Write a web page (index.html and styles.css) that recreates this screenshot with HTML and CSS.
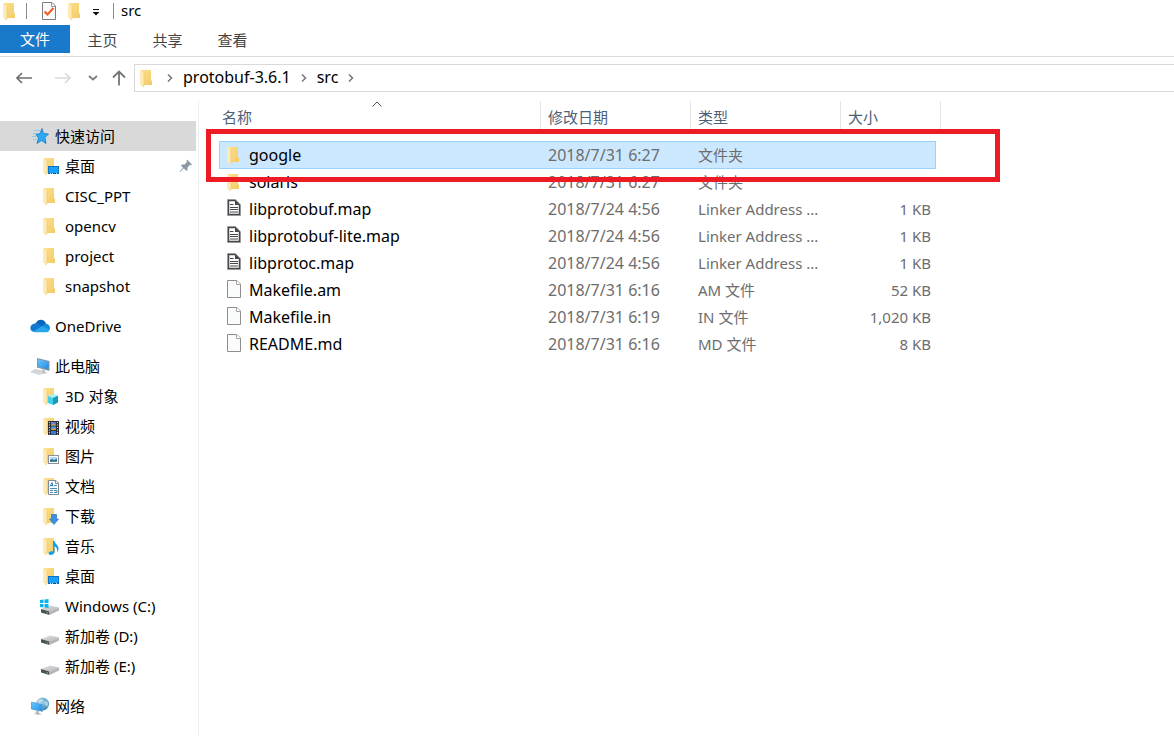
FILE: index.html
```html
<!DOCTYPE html>
<html lang="zh-CN">
<head>
<meta charset="utf-8">
<meta name="viewport" content="width=device-width, initial-scale=1">
<title>src</title>
<link rel="stylesheet" href="styles.css">
</head>
<body>
<svg class="sprite" aria-hidden="true">
  <defs>
    <linearGradient id="gold" x1="0" y1="0" x2="1" y2="1"><stop offset="0" stop-color="#fbe08f"/><stop offset="1" stop-color="#f3cb66"/></linearGradient>
    <linearGradient id="screen" x1="0" y1="0" x2="1" y2="1"><stop offset="0" stop-color="#6cc4fb"/><stop offset="1" stop-color="#1c8fe6"/></linearGradient>
    <linearGradient id="metal" x1="0" y1="0" x2="1" y2="1"><stop offset="0" stop-color="#e4e5e7"/><stop offset="1" stop-color="#b0b2b6"/></linearGradient>
    <radialGradient id="earth" cx=".4" cy=".3" r=".8"><stop offset="0" stop-color="#a9d8ee"/><stop offset="1" stop-color="#2d7ba9"/></radialGradient>
  </defs>
  <symbol id="folder" viewBox="0 0 20 20">
    <path d="M4 2H14V12L15 13V17H6L4 15Z" fill="url(#gold)"/>
    <path d="M3 2L7 5V18L5.500 19L3 16.500Z" fill="#fdeab4"/>
    <path d="M7 5V18L5.500 19" fill="none" stroke="#edc766" stroke-width=".6"/>
  </symbol>
  <symbol id="folder-desktop" viewBox="0 0 20 20">
    <use href="#folder"/>
    <rect x="8.500" y="10.500" width="10" height="7" fill="#18a0fb" stroke="#0874c4"/>
    <path d="M9 17.500H18" stroke="#06518e"/><path d="M10 17.500h1M12 17.500h1M16 17.500h1" stroke="#bfe5ff"/>
  </symbol>
  <symbol id="folder-3d" viewBox="0 0 20 20">
    <use href="#folder"/>
    <path d="M8 10L13 8L18 9.500L13 12Z" fill="#a9effa"/><path d="M8 10L13 12V19L8 17Z" fill="#46cfe3"/><path d="M13 12L18 9.500V16.500L13 19Z" fill="#129cbc"/>
  </symbol>
  <symbol id="folder-video" viewBox="0 0 20 20">
    <use href="#folder"/>
    <rect x="8" y="5" width="11" height="14" fill="#303238"/>
    <path d="M9.500 6V19M17.500 6V19" stroke="#d8dade" stroke-dasharray="1 1.500"/>
    <rect x="11" y="6" width="5" height="3.500" fill="#4d8be8"/><rect x="11" y="10.500" width="5" height="3.500" fill="#37a0e6"/><rect x="11" y="15" width="5" height="3.500" fill="#3978ce"/>
    <path d="M11 9.500L13 7.500L16 9.500ZM11 14L14 12L16 14Z" fill="#e6a72f"/><path d="M14 6h2v2Z" fill="#d6453c"/>
  </symbol>
  <symbol id="folder-picture" viewBox="0 0 20 20">
    <use href="#folder"/>
    <rect x="8.500" y="9.500" width="10" height="8" fill="#fff" stroke="#8b929a"/>
    <rect x="10" y="11" width="7" height="5" fill="#aed9f5"/><path d="M10 14L12 13L14 14L17 12.500V16H10Z" fill="#356b9a"/><path d="M10 16L14 14.500L17 15V16Z" fill="#4b9677"/>
  </symbol>
  <symbol id="folder-document" viewBox="0 0 20 20">
    <use href="#folder"/>
    <path d="M8.500 4.500H16L18.500 7V18.500H8.500Z" fill="#fff" stroke="#858b92"/><path d="M15.500 4.500V7.500H18.500" fill="none" stroke="#858b92"/>
    <path d="M10 10.500L12 6.500L13 10.500M11 9.500H13" fill="none" stroke="#258bc9"/><path d="M14 9.500H17M10 12.500H17M10 16.500H13M14 14.500H17V16.500H14" stroke="#438db9" fill="none"/><path d="M10 14.500H13" stroke="#697580"/>
  </symbol>
  <symbol id="folder-download" viewBox="0 0 20 20">
    <use href="#folder"/><path d="M11.500 8.500H16.500V13H18.500L14 18.500L9.500 13H11.500Z" fill="#3c91e4" stroke="#2776c5" stroke-width=".7"/>
  </symbol>
  <symbol id="folder-music" viewBox="0 0 20 20">
    <use href="#folder"/><path d="M13 5H14.500C15 8 18.500 9 18.500 12.500C18.500 14 18 15 17 16C17.500 12.500 16.500 11 14.500 10.500V16C14.500 18 12.500 19 10.500 19C8 19 8 16 10.500 15.500C11.500 15.200 12.500 15.300 13 15.500Z" fill="#119ff0"/>
  </symbol>
  <symbol id="star" viewBox="0 0 20 20">
    <path d="M12 2.500L13.500 7.500L18.500 8L15 11.500L16 17.500L11.500 14.500L7 17.500L8.500 12L6 8.500L10 7.500Z" fill="#2da9f4" stroke="#167bc0" stroke-width=".8"/>
    <path d="M4 4.500H10M3 7.500H7M2 10.500H6M3 13.500H6.500" stroke="#7cc4ec" stroke-width=".8"/>
  </symbol>
  <symbol id="cloud" viewBox="0 0 20 20">
    <path d="M5.500 8C7 2.500 14.500 2 16.200 8L11 12Z" fill="#0864b8"/>
    <path d="M4 16C-1.500 15 -.5 8 5 7.500C8 6.500 10 9 13 10.500L8 15.500Z" fill="#1179cf"/>
    <path d="M15 7.700C19 7.500 21 11 19.500 14L12 12L13 9Z" fill="#168bdc"/>
    <path d="M3 15.500L12 10.300L19.700 13.500C19 16 17.500 16.300 16 16.300H5Q4 16.300 3 15.500Z" fill="#28a8ea"/>
  </symbol>
  <symbol id="computer" viewBox="0 0 20 20">
    <path d="M7 2L19.500 5V15L7 11.500Z" fill="#8d9399"/><path d="M8 3.300L18.500 5.800V13.500L8 10.500Z" fill="url(#screen)"/>
    <path d="M12 13L15 14V16L18 17L13 18L9 16.500L12 15.500Z" fill="#c1c5c9"/><path d="M1 16L5 13.500L14 15.500L10 18.500Z" fill="#e2e4e6" stroke="#b5b9be" stroke-width=".6"/><path d="M3.500 15.500L10 17.200M5 14.500L12 16.200" stroke="#bdc0c3" stroke-width=".5"/>
  </symbol>
  <symbol id="drive" viewBox="0 0 20 20">
    <path d="M1 13L10 9.500L19 11.500L9.500 15.500Z" fill="url(#metal)"/><path d="M1 13L9.500 15.500V19L1 16.500Z" fill="#4d5053"/><path d="M9.500 15.500L19 11.500V14.500L9.500 19Z" fill="#b2b4b8"/><path d="M6.500 16.500L8 17" stroke="#42d95a"/>
  </symbol>
  <symbol id="drive-system" viewBox="0 0 20 20">
    <use href="#drive"/><path d="M0 4L3.500 3.500V7H0ZM4.500 3.400L8.500 3V7H4.500ZM0 8H3.500V11.500L0 11ZM4.500 8H8.500V12L4.500 11.600Z" fill="#08b4ef"/>
  </symbol>
  <symbol id="network" viewBox="0 0 20 20">
    <circle cx="12.500" cy="8" r="6.500" fill="url(#earth)"/><path d="M8 4C10 2.500 12 3 13 4C12 6 10 5.500 9 7L7 6ZM14 6L17 5L18.500 8L17 11L15 9Z" fill="#d4ecf5" opacity=".6"/>
    <path d="M1 5.500L13 8V16L1 13.500Z" fill="#dcebf5"/><path d="M1.500 6.200L12.500 8.500V15.300L1.500 13Z" fill="url(#screen)" stroke="#2b80ba" stroke-width=".5"/><path d="M6 14.500L9 15.200V17L12 18L8 19L4 17.500L6 16.500Z" fill="#b4bdc5"/>
  </symbol>
  <symbol id="page" viewBox="0 0 20 20">
    <path d="M3.500 .5H13L16.500 4V17.500H3.500Z" fill="#fafbfb" stroke="#8e8e8e"/><path d="M12.500 .5V4.500H16.500" fill="#fff" stroke="#a3a3a3"/>
  </symbol>
  <symbol id="map-file" viewBox="0 0 20 20">
    <path d="M4 1H11L16 6V16H4Z" fill="#fff" stroke="#b5b5b7" stroke-width="2"/>
    <path d="M4.500 1.500H11L15.500 6V15.500H4.500Z" fill="#fff" stroke="#48484c" stroke-width="1.500"/><path d="M11 1.500V6H15.500Z" fill="#48484c"/><path d="M6 5.500H9.500M6 8.500H14M6 10.500H14M6 13H14" stroke="#48484c" stroke-width="1.200"/>
  </symbol>
  <symbol id="properties" viewBox="0 0 20 20">
    <path d="M3.500 1.500H13L16.500 5V18.500H3.500Z" fill="#fafafa" stroke="#7d7d7d"/><path d="M12.500 1.500V5.500H16.500" fill="none" stroke="#999"/><path d="M5.500 10.500L8.500 13.500L14.500 7" fill="none" stroke="#ef5b20" stroke-width="2"/>
  </symbol>
  <symbol id="pin" viewBox="0 0 14 14">
    <path d="M8 .5L13 5.500L12 6.300L10.800 6L8.500 8.500L8.500 11L7.500 12L4.800 9.300L1 13L.5 12.500L4 8.700L2 6.500L3 5.500H5.500L8 3L7.500 1.500Z" fill="#8b98a4"/>
  </symbol>
  <symbol id="chevron" viewBox="0 0 8 10"><path d="M2 1.500L5.500 5L2 8.500" fill="none" stroke="#767676" stroke-width="1.500"/></symbol>
</svg>

<header class="titlebar">
  <svg class="icon"><use href="#folder"/></svg>
  <span class="rule rule-first"></span>
  <button class="quick" aria-label="属性"><svg class="icon"><use href="#properties"/></svg></button>
  <button class="quick" aria-label="新建文件夹"><svg class="icon"><use href="#folder"/></svg></button>
  <button class="quick quick-menu" aria-label="自定义快速访问工具栏"><svg width="8" height="8" viewBox="0 0 8 8"><path d="M1 1.500H7" stroke="#111"/><path d="M.5 4H7.500L4 7.500Z" fill="#111"/></svg></button>
  <span class="rule rule-last"></span>
  <h1 class="title">src</h1>
</header>

<div class="tabs">
  <button class="tab tab-file">文件</button>
  <button class="tab">主页</button>
  <button class="tab">共享</button>
  <button class="tab">查看</button>
</div>

<nav class="toolbar" aria-label="导航">
  <div class="history">
    <button aria-label="后退"><svg width="16" height="12" viewBox="0 0 16 12"><path d="M16 6H1.500M6 1L1 6L6 11" fill="none" stroke="#6f6f6f" stroke-width="1.600"/></svg></button>
    <button aria-label="前进"><svg width="16" height="12" viewBox="0 0 16 12"><path d="M0 6H14.500M10 1L15 6L10 11" fill="none" stroke="#d9d9d9" stroke-width="1.600"/></svg></button>
    <button aria-label="最近位置"><svg width="10" height="6" viewBox="0 0 10 6"><path d="M1 1L5 4.500L9 1" fill="none" stroke="#7b7b7b" stroke-width="1.800"/></svg></button>
    <button aria-label="上移"><svg width="14" height="16" viewBox="0 0 14 16"><path d="M7 15.500V1.500M1 7.500L7 1.500L13 7.500" fill="none" stroke="#757575" stroke-width="1.800"/></svg></button>
  </div>
  <div class="address">
    <svg class="icon"><use href="#folder"/></svg>
    <svg class="chevron"><use href="#chevron"/></svg>
    <a href="#protobuf">protobuf-3.6.1</a>
    <svg class="chevron"><use href="#chevron"/></svg>
    <a href="#src">src</a>
    <svg class="chevron"><use href="#chevron"/></svg>
  </div>
</nav>

<div class="body">
  <aside class="sidebar">
    <div class="group">
      <a class="item root current" href="#quick"><svg class="icon"><use href="#star"/></svg>快速访问</a>
      <a class="item" href="#desktop"><svg class="icon"><use href="#folder-desktop"/></svg>桌面<svg class="pin"><use href="#pin"/></svg></a>
      <a class="item" href="#cisc"><svg class="icon"><use href="#folder"/></svg>CISC_PPT</a>
      <a class="item" href="#opencv"><svg class="icon"><use href="#folder"/></svg>opencv</a>
      <a class="item" href="#project"><svg class="icon"><use href="#folder"/></svg>project</a>
      <a class="item" href="#snapshot"><svg class="icon"><use href="#folder"/></svg>snapshot</a>
    </div>
    <div class="group">
      <a class="item root" href="#onedrive"><svg class="icon"><use href="#cloud"/></svg>OneDrive</a>
    </div>
    <div class="group">
      <a class="item root" href="#pc"><svg class="icon"><use href="#computer"/></svg>此电脑</a>
      <a class="item" href="#objects"><svg class="icon"><use href="#folder-3d"/></svg>3D 对象</a>
      <a class="item" href="#videos"><svg class="icon"><use href="#folder-video"/></svg>视频</a>
      <a class="item" href="#pictures"><svg class="icon"><use href="#folder-picture"/></svg>图片</a>
      <a class="item" href="#documents"><svg class="icon"><use href="#folder-document"/></svg>文档</a>
      <a class="item" href="#downloads"><svg class="icon"><use href="#folder-download"/></svg>下载</a>
      <a class="item" href="#music"><svg class="icon"><use href="#folder-music"/></svg>音乐</a>
      <a class="item" href="#pc-desktop"><svg class="icon"><use href="#folder-desktop"/></svg>桌面</a>
      <a class="item" href="#c"><svg class="icon"><use href="#drive-system"/></svg>Windows (C:)</a>
      <a class="item" href="#d"><svg class="icon"><use href="#drive"/></svg>新加卷 (D:)</a>
      <a class="item" href="#e"><svg class="icon"><use href="#drive"/></svg>新加卷 (E:)</a>
    </div>
    <div class="group">
      <a class="item root" href="#network-places"><svg class="icon"><use href="#network"/></svg>网络</a>
    </div>
  </aside>

  <main class="content">
    <table class="files">
      <colgroup><col class="c-edge"><col class="c-name"><col class="c-date"><col class="c-type"><col class="c-size"><col class="c-edge"></colgroup>
      <thead>
        <tr>
          <th colspan="2" aria-sort="ascending"><button class="sort sort-name">名称<svg class="caret" viewBox="0 0 10 6"><path d="M.5 5.500L5 1L9.500 5.500" fill="none" stroke="#555"/></svg></button></th>
          <th><button class="sort">修改日期</button></th>
          <th><button class="sort">类型</button></th>
          <th colspan="2"><button class="sort">大小</button></th>
        </tr>
      </thead>
      <tbody>
        <tr class="selected"><td></td><td class="name"><span><svg class="icon"><use href="#folder"/></svg>google</span></td><td class="date">2018/7/31 6:27</td><td>文件夹</td><td class="size"></td><td></td></tr>
        <tr><td></td><td class="name"><span><svg class="icon"><use href="#folder"/></svg>solaris</span></td><td class="date">2018/7/31 6:27</td><td>文件夹</td><td class="size"></td><td></td></tr>
        <tr><td></td><td class="name"><span><svg class="icon"><use href="#map-file"/></svg>libprotobuf.map</span></td><td class="date">2018/7/24 4:56</td><td>Linker Address ...</td><td class="size">1 KB</td><td></td></tr>
        <tr><td></td><td class="name"><span><svg class="icon"><use href="#map-file"/></svg>libprotobuf-lite.map</span></td><td class="date">2018/7/24 4:56</td><td>Linker Address ...</td><td class="size">1 KB</td><td></td></tr>
        <tr><td></td><td class="name"><span><svg class="icon"><use href="#map-file"/></svg>libprotoc.map</span></td><td class="date">2018/7/24 4:56</td><td>Linker Address ...</td><td class="size">1 KB</td><td></td></tr>
        <tr><td></td><td class="name"><span><svg class="icon"><use href="#page"/></svg>Makefile.am</span></td><td class="date">2018/7/31 6:16</td><td>AM 文件</td><td class="size">52 KB</td><td></td></tr>
        <tr><td></td><td class="name"><span><svg class="icon"><use href="#page"/></svg>Makefile.in</span></td><td class="date">2018/7/31 6:19</td><td>IN 文件</td><td class="size">1,020 KB</td><td></td></tr>
        <tr><td></td><td class="name"><span><svg class="icon"><use href="#page"/></svg>README.md</span></td><td class="date">2018/7/31 6:16</td><td>MD 文件</td><td class="size">8 KB</td><td></td></tr>
      </tbody>
    </table>
    <div class="marker"></div>
  </main>
</div>
</body>
</html>
```

FILE: styles.css
```css
* {
  box-sizing: border-box;
}

body {
  margin: 0;
  min-height: 100vh;
  display: flex;
  flex-direction: column;
  background: #fff;
  color: #000;
  font: 15px/20px "Noto Sans", "Noto Sans CJK SC", sans-serif;
}

button {
  padding: 0;
  border: 0;
  background: none;
  color: inherit;
  font: inherit;
}

a {
  color: inherit;
  text-decoration: none;
}

svg {
  flex: none;
  display: block;
}

.sprite {
  position: absolute;
  width: 0;
  height: 0;
}

.icon {
  width: 20px;
  height: 20px;
}

.titlebar {
  display: flex;
  align-items: center;
  height: 25px;
  padding-bottom: 4px;
}

.rule {
  width: 1px;
  height: 16px;
  background: #8c8c8c;
}

.rule-first {
  margin: 0 12px 0 6px;
}

.rule-last {
  margin: 0 7px 0 13px;
}

.quick {
  margin-right: 6px;
}

.quick-menu {
  margin: 2px 0 0 1px;
}

.title {
  margin: 0;
  padding-bottom: 2px;
  font-size: 15px;
  font-weight: 400;
}

.tabs {
  display: flex;
  height: 32px;
  border-bottom: 1px solid #dadbdc;
}

.tab {
  width: 65px;
  height: 30px;
  color: #444;
}

.tab-file {
  width: 70px;
  height: 28px;
  background: #1979ca;
  color: #fff;
}

.toolbar {
  display: flex;
  height: 44px;
  padding: 7px 0 9px 4px;
}

.history {
  display: grid;
  grid-template-columns: 40px 38px 21px 31px;
}

.history button {
  display: flex;
  align-items: center;
  justify-content: center;
}

.address {
  flex: 1;
  display: flex;
  align-items: center;
  padding-left: 2px;
  border: 1px solid #d9d9d9;
  border-right: 0;
  font-size: 16px;
}

.address a {
  padding-bottom: 2px;
}

.chevron {
  width: 8px;
  height: 10px;
  margin: 0 9px;
}

.body {
  flex: 1;
  display: flex;
}

.sidebar {
  width: 199px;
  flex: none;
  padding: 20px 2px 0 0;
  border-right: 1px solid #f0f0f0;
}

.group {
  margin-bottom: 10px;
}

.item {
  display: flex;
  align-items: center;
  gap: 5px;
  height: 30px;
  padding-left: 40px;
}

.root {
  padding-left: 30px;
}

.current {
  background: #d9d9d9;
}

.pin {
  width: 14px;
  height: 14px;
  margin: 0 3px 0 auto;
}

.content {
  position: relative;
  flex: 1;
  min-width: 0;
  padding-left: 15px;
}

.files {
  width: 727px;
  table-layout: fixed;
  border-collapse: separate;
  border-spacing: 0;
}

.c-edge {
  width: 5px;
}

.c-name {
  width: 322px;
}

.c-date,
.c-type {
  width: 150px;
}

.c-size {
  width: 95px;
}

.files th {
  height: 40px;
  padding: 0;
  vertical-align: top;
  font-weight: 400;
}

.sort {
  position: relative;
  display: block;
  width: 100%;
  height: 30px;
  padding: 2px 0 0 7px;
  border-right: 1px solid #e5e5e5;
  color: #4c607a;
  text-align: left;
}

.sort-name {
  padding-left: 8px;
}

.caret {
  position: absolute;
  top: 0;
  left: 50%;
  width: 10px;
  height: 6px;
  margin-left: -5px;
}

.files td {
  height: 27px;
  padding: 0 0 0 7px;
  color: #6d6d6d;
  white-space: nowrap;
}

.files td:first-child,
.files td:last-child {
  padding: 0;
}

.files .name {
  padding-left: 5px;
  color: #000;
  font-size: 16px;
}

.files .date {
  font-size: 16px;
}

.name span {
  display: flex;
  align-items: center;
  gap: 5px;
}

.files .size {
  padding: 0 5px 0 0;
  text-align: right;
}

.selected td:not(:first-child):not(:last-child) {
  background: #cce8ff;
  border-top: 1px solid #99d1ff;
  box-shadow: 0 1px #99d1ff;
}

.selected td.name:not(:first-child):not(:last-child) {
  border-left: 1px solid #99d1ff;
  padding-left: 4px;
}

.selected td.size:not(:first-child):not(:last-child) {
  border-right: 1px solid #99d1ff;
}

.marker {
  position: absolute;
  top: 28px;
  left: 7px;
  width: 794px;
  height: 53px;
  border: 5px solid #ed1c24;
  pointer-events: none;
}
```
